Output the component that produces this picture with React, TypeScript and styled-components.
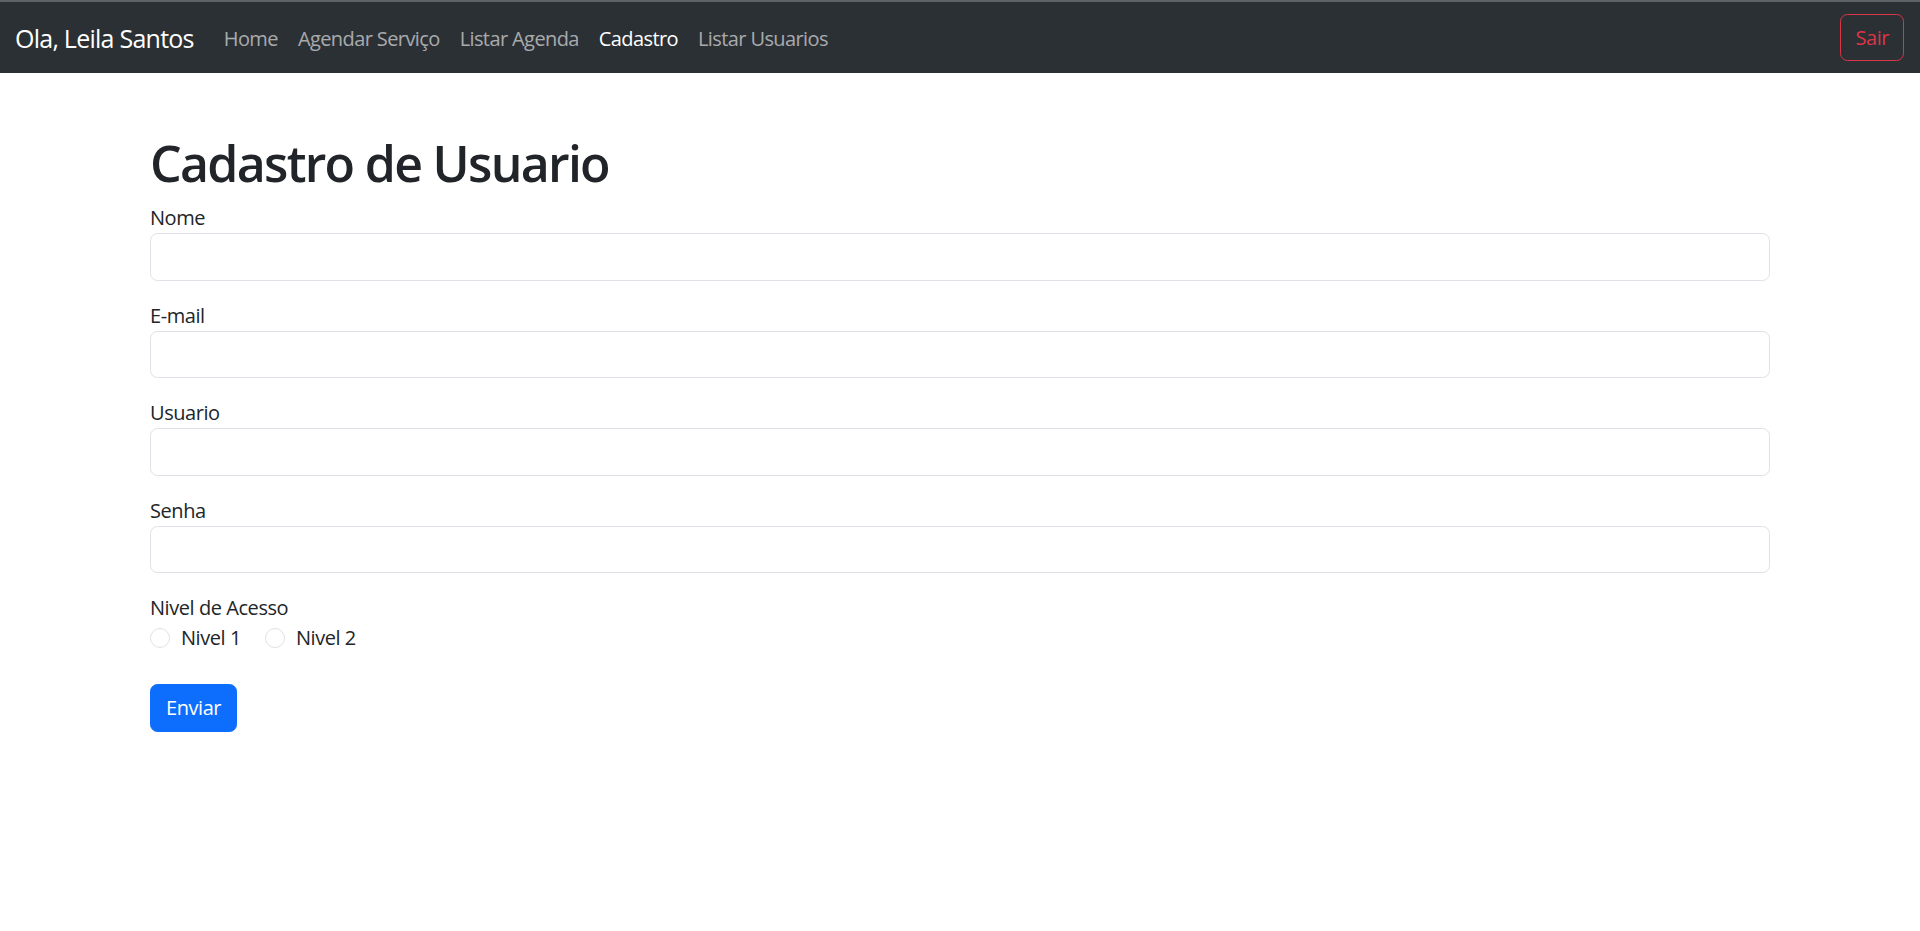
import React from "react";
import styled, { createGlobalStyle } from "styled-components";

const GlobalStyle = createGlobalStyle`
  html, body { margin: 0; padding: 0; background: #fff; }
  body {
    font-family: "Open Sans", "Noto Sans", "Liberation Sans", sans-serif;
    font-size: 20px;
    line-height: 1.5;
    color: #212529;
    letter-spacing: -0.022em;
  }
  * { box-sizing: border-box; }
`;

const NavBar = styled.nav`
  height: 73px;
  border-top: 2px solid #5f6367;
  background: #2b3035;
  display: flex;
  align-items: center;
  padding: 2px 16px 0 15px;
`;

const Brand = styled.a`
  font-size: 25px;
  color: #fff;
  text-decoration: none;
  margin-right: 20px;
  line-height: 1.5;
  letter-spacing: -0.03em;
`;

const NavList = styled.ul`
  display: flex;
  list-style: none;
  margin: 0;
  padding: 0;
  flex: 1;
`;

const NavLink = styled.a<{ $active?: boolean }>`
  display: block;
  padding: 10px 10px;
  font-size: 20px;
  letter-spacing: -0.03em;
  color: ${(p) => (p.$active ? "#fff" : "rgba(255,255,255,0.6)")};
  text-decoration: none;
`;

const OutlineDanger = styled.button`
  font-family: inherit;
  font-size: 20px;
  line-height: 1.5;
  letter-spacing: inherit;
  color: #dc3545;
  background: transparent;
  border: 1px solid #dc3545;
  border-radius: 7.5px;
  padding: 7px 14px;
  height: 47px;
  margin-top: -2px;
  cursor: pointer;
`;

const Container = styled.main`
  margin: 60px auto 0;
  padding: 0 15px;
  width: 1650px;
`;

const Title = styled.h1`
  font-size: 50px;
  font-weight: 600;
  line-height: 1.2;
  letter-spacing: -0.034em;
  margin: 0 0 10px;
`;

const Field = styled.div`
  margin-bottom: 20px;
`;

const Label = styled.label`
  display: block;
  font-size: 20px;
  line-height: 30px;
`;

const Input = styled.input`
  display: block;
  width: 100%;
  height: 47.5px;
  padding: 7.5px 15px;
  font-family: inherit;
  font-size: 20px;
  border: 1px solid #dee2e6;
  border-radius: 7.5px;
  background: #fff;
  outline: none;
`;

const RadioRow = styled.div`
  display: flex;
  height: 30px;
  margin-bottom: 31px;
`;

const RadioItem = styled.label`
  display: flex;
  align-items: center;
  margin-right: 24px;
  font-size: 20px;
  line-height: 30px;
`;

const Radio = styled.span`
  width: 20px;
  height: 20px;
  border-radius: 50%;
  border: 1px solid #dee2e6;
  margin-right: 11px;
  background: #fff;
`;

const Primary = styled.button`
  font-family: inherit;
  font-size: 20px;
  line-height: 1.5;
  letter-spacing: inherit;
  color: #fff;
  background: #0d6efd;
  border: 1px solid #0d6efd;
  border-radius: 7.5px;
  padding: 7.5px 15px;
  height: 47.5px;
  cursor: pointer;
`;

const links = [
  { label: "Home" },
  { label: "Agendar Serviço" },
  { label: "Listar Agenda" },
  { label: "Cadastro", active: true },
  { label: "Listar Usuarios" },
];

const fields = ["Nome", "E-mail", "Usuario", "Senha"];

export default function App() {
  return (
    <>
      <GlobalStyle />
      <NavBar>
        <Brand href="#">Ola, Leila Santos</Brand>
        <NavList>
          {links.map((l) => (
            <li key={l.label}>
              <NavLink href="#" $active={l.active}>
                {l.label}
              </NavLink>
            </li>
          ))}
        </NavList>
        <OutlineDanger>Sair</OutlineDanger>
      </NavBar>
      <Container>
        <Title>Cadastro de Usuario</Title>
        {fields.map((f) => (
          <Field key={f}>
            <Label>{f}</Label>
            <Input type={f === "Senha" ? "password" : "text"} />
          </Field>
        ))}
        <Label>Nivel de Acesso</Label>
        <RadioRow>
          <RadioItem>
            <Radio />
            Nivel 1
          </RadioItem>
          <RadioItem>
            <Radio />
            Nivel 2
          </RadioItem>
        </RadioRow>
        <Primary>Enviar</Primary>
      </Container>
    </>
  );
}
